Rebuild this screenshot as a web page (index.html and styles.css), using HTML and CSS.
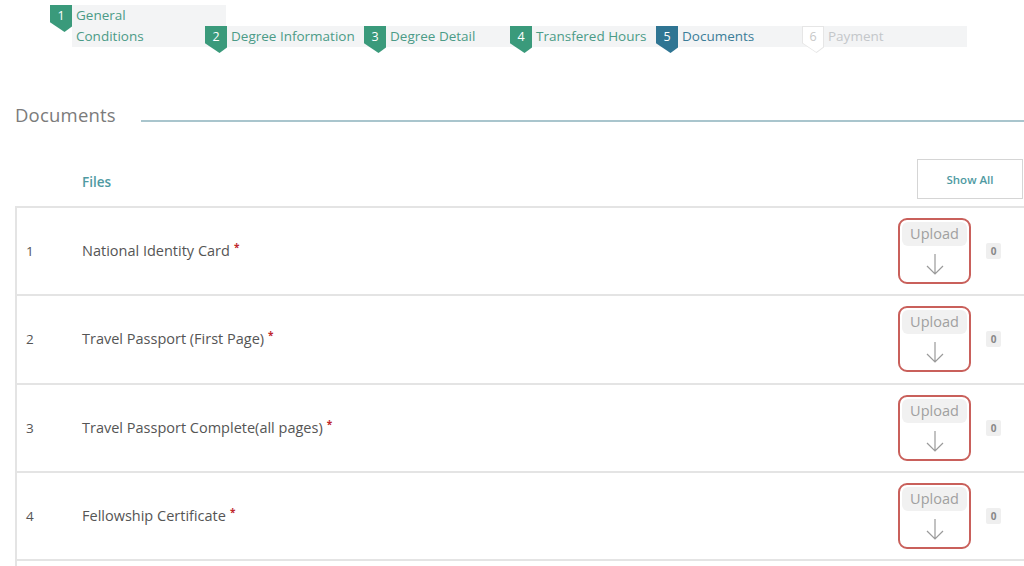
FILE: index.html
```html
<!DOCTYPE html>
<html>
<head>
<meta charset="utf-8">
<link rel="stylesheet" href="styles.css">
</head>
<body>
<div class="page">
  <ol class="stepper">
    <li class="step step-first done">
      <span class="badge">1</span>
      <span class="label label-tall">General<br>Conditions</span>
    </li>
    <li class="step step-wide done">
      <span class="badge">2</span>
      <span class="label">Degree Information</span>
    </li>
    <li class="step done">
      <span class="badge">3</span>
      <span class="label">Degree Detail</span>
    </li>
    <li class="step done">
      <span class="badge">4</span>
      <span class="label">Transfered Hours</span>
    </li>
    <li class="step current">
      <span class="badge">5</span>
      <span class="label">Documents</span>
    </li>
    <li class="step step-last todo">
      <span class="badge">6</span>
      <span class="label">Payment</span>
    </li>
  </ol>

  <div class="section-title">
    <h2>Documents</h2>
    <span class="rule"></span>
  </div>

  <div class="files-head">
    <span class="files-label">Files</span>
    <button class="show-all">Show All</button>
  </div>

  <div class="table">
    <div class="row">
      <span class="num">1</span>
      <span class="name">National Identity Card<span class="req">*</span></span>
      <div class="upload">
        <span class="upload-text">Upload</span>
        <svg class="arrow" viewBox="0 0 20 24" width="20" height="24"><path d="M10 2 V22 M2 14 L10 22 L18 14" fill="none" stroke="#9a9a9a" stroke-width="1.2"/></svg>
      </div>
      <span class="count">0</span>
    </div>
    <div class="row">
      <span class="num">2</span>
      <span class="name">Travel Passport (First Page)<span class="req">*</span></span>
      <div class="upload">
        <span class="upload-text">Upload</span>
        <svg class="arrow" viewBox="0 0 20 24" width="20" height="24"><path d="M10 2 V22 M2 14 L10 22 L18 14" fill="none" stroke="#9a9a9a" stroke-width="1.2"/></svg>
      </div>
      <span class="count">0</span>
    </div>
    <div class="row">
      <span class="num">3</span>
      <span class="name">Travel Passport Complete(all pages)<span class="req">*</span></span>
      <div class="upload">
        <span class="upload-text">Upload</span>
        <svg class="arrow" viewBox="0 0 20 24" width="20" height="24"><path d="M10 2 V22 M2 14 L10 22 L18 14" fill="none" stroke="#9a9a9a" stroke-width="1.2"/></svg>
      </div>
      <span class="count">0</span>
    </div>
    <div class="row">
      <span class="num">4</span>
      <span class="name">Fellowship Certificate<span class="req">*</span></span>
      <div class="upload">
        <span class="upload-text">Upload</span>
        <svg class="arrow" viewBox="0 0 20 24" width="20" height="24"><path d="M10 2 V22 M2 14 L10 22 L18 14" fill="none" stroke="#9a9a9a" stroke-width="1.2"/></svg>
      </div>
      <span class="count">0</span>
    </div>
    <div class="row row-empty"></div>
  </div>
</div>
</body>
</html>
```

FILE: styles.css
```css
* { box-sizing: border-box; }
html, body { margin: 0; padding: 0; background: #fff; }
body {
  font-family: "Open Sans", "Noto Sans", sans-serif;
  color: #555;
  overflow: hidden;
  width: 1024px;
  height: 566px;
}
.page { width: 1024px; }

/* stepper */
.stepper {
  list-style: none;
  margin: 0;
  padding: 5px 0 0 50px;
  display: flex;
  align-items: flex-start;
  height: 60px;
}
.step {
  display: flex;
  align-items: flex-start;
  width: 146px;
  height: 21px;
  margin-top: 21px;
  background: #f3f4f5;
  font-size: 13.5px;
  line-height: 21px;
}
.step-first {
  width: 155px;
  height: auto;
  margin-top: 0;
  background: transparent;
}
.step-wide { width: 159px; }
.step-last { width: 165px; }
.badge {
  flex: none;
  width: 22px;
  height: 27px;
  color: #fff;
  font-size: 12.5px;
  line-height: 21px;
  text-align: center;
  clip-path: polygon(0 0, 100% 0, 100% 80%, 66% 100%, 0 64%);
  position: relative;
  z-index: 1;
}
.label {
  padding-left: 4px;
  white-space: nowrap;
}
.label-tall {
  width: 154px;
  margin-right: -21px;
  background: #f3f4f5;
  line-height: 21px;
}
.done .badge { background: #3a9a7b; }
.done .label { color: #4b9b87; }
.current .badge { background: #2f7593; }
.current .label { color: #3b7d98; }
.todo .badge {
  background: #e6e6e6;
  color: #c8c8c8;
}
.todo .badge::before {
  content: "";
  position: absolute;
  inset: 1px;
  background: #fff;
  clip-path: polygon(0 0, 100% 0, 100% 80%, 66% 100%, 0 64%);
  z-index: -1;
}
.todo .label { color: #c4c7ca; }

/* section heading */
.section-title {
  display: flex;
  align-items: center;
  padding-left: 15px;
  margin-top: 40px;
  height: 30px;
}
.section-title h2 {
  margin: 0;
  font-weight: 400;
  font-size: 18.5px;
  color: #7b7b7b;
  letter-spacing: 0.2px;
  position: relative;
  top: -1px;
}
.rule {
  flex: 1;
  height: 2px;
  background: #a9c5cd;
  margin-left: 25px;
  margin-top: 12px;
}

/* files header */
.files-head {
  display: flex;
  align-items: center;
  justify-content: space-between;
  margin-top: 29px;
  padding-left: 82px;
  padding-right: 1px;
  height: 40px;
}
.files-label {
  color: #4f9aa2;
  font-size: 13.5px;
  font-weight: 600;
  margin-top: 6px;
}
.show-all {
  width: 106px;
  height: 40px;
  background: #fff;
  border: 1px solid #d5d5d5;
  color: #4f9aa2;
  font-family: inherit;
  font-size: 11.5px;
  font-weight: 600;
}

/* table */
.table {
  margin-top: 7px;
  margin-left: 15px;
  border-left: 2px solid #e4e4e4;
  border-top: 2px solid #e4e4e4;
}
.row {
  display: flex;
  align-items: center;
  height: 88.3px;
  border-bottom: 2px solid #e4e4e4;
}
.row-empty { border-bottom: none; }
.num {
  width: 65px;
  padding-left: 9px;
  font-size: 13.5px;
  color: #555;
}
.name {
  flex: 1;
  font-size: 14.5px;
  color: #555;
  position: relative;
  top: -1px;
}
.req {
  color: #c0282c;
  font-size: 10px;
  font-weight: 700;
  margin-left: 4px;
  vertical-align: 5px;
}
.upload {
  width: 73px;
  height: 66px;
  border: 2px solid #c9605b;
  border-radius: 9px;
  display: flex;
  flex-direction: column;
  align-items: center;
  padding: 2px;
}
.upload-text {
  align-self: stretch;
  background: #f1f1f1;
  border-radius: 6px;
  color: #a0a0a0;
  font-size: 14.5px;
  text-align: center;
  line-height: 24px;
}
.arrow { margin-top: 6px; }
.count {
  margin-left: 15px;
  margin-right: 23px;
  width: 15px;
  height: 16px;
  background: #efefef;
  color: #888;
  font-size: 10px;
  font-weight: 700;
  line-height: 16px;
  text-align: center;
  border-radius: 2px;
}
```
